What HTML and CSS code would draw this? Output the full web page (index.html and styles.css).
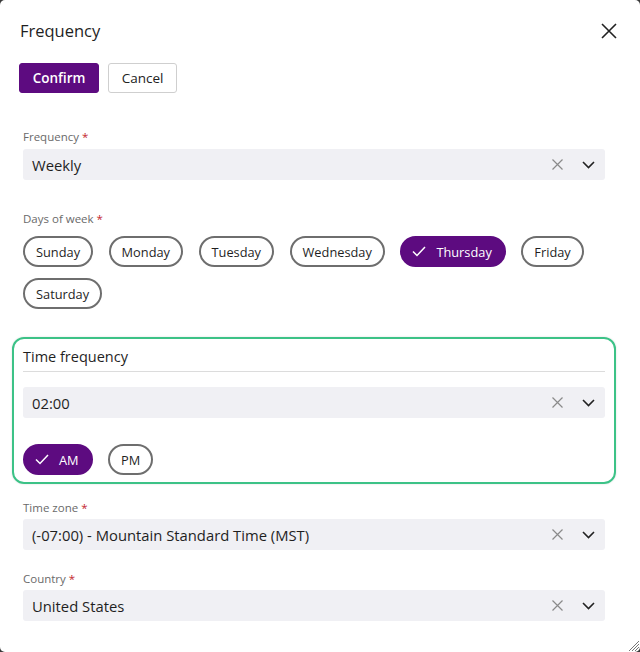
FILE: index.html
```html
<!DOCTYPE html>
<html>
<head>
<meta charset="utf-8">
<link rel="stylesheet" href="styles.css">
</head>
<body>
<div class="dialog">
  <div class="header">
    <h1 class="title">Frequency</h1>
    <button class="close" aria-label="Close">
      <svg width="16" height="16" viewBox="0 0 16 16"><path d="M1 1L15 15M15 1L1 15" stroke="#222" stroke-width="1.6" fill="none"/></svg>
    </button>
  </div>
  <div class="actions">
    <button class="btn primary">Confirm</button>
    <button class="btn secondary">Cancel</button>
  </div>

  <div class="form">
    <div class="field f-frequency">
      <label class="label">Frequency <span class="req">*</span></label>
      <div class="select">
        <span class="value">Weekly</span>
        <span class="clear"><svg width="11" height="11" viewBox="0 0 11 11"><path d="M0.5 0.5L10.5 10.5M10.5 0.5L0.5 10.5" stroke="#8a8a8a" stroke-width="1.2" fill="none"/></svg></span>
        <span class="chev"><svg width="13" height="8" viewBox="0 0 13 8"><path d="M1 1L6.5 6.5L12 1" stroke="#222" stroke-width="1.6" fill="none"/></svg></span>
      </div>
    </div>

    <div class="field f-days">
      <label class="label">Days of week <span class="req">*</span></label>
      <div class="chips">
        <span class="chip">Sunday</span>
        <span class="chip">Monday</span>
        <span class="chip">Tuesday</span>
        <span class="chip">Wednesday</span>
        <span class="chip selected"><svg class="check" width="14" height="11" viewBox="0 0 14 11"><path d="M1 5.5L5 9.5L13 1" stroke="#fff" stroke-width="1.5" fill="none"/></svg>Thursday</span>
        <span class="chip">Friday</span>
        <span class="chip">Saturday</span>
      </div>
    </div>

    <div class="timebox">
      <div class="tb-head">Time frequency</div>
      <div class="select tb-select">
        <span class="value">02:00</span>
        <span class="clear"><svg width="11" height="11" viewBox="0 0 11 11"><path d="M0.5 0.5L10.5 10.5M10.5 0.5L0.5 10.5" stroke="#8a8a8a" stroke-width="1.2" fill="none"/></svg></span>
        <span class="chev"><svg width="13" height="8" viewBox="0 0 13 8"><path d="M1 1L6.5 6.5L12 1" stroke="#222" stroke-width="1.6" fill="none"/></svg></span>
      </div>
      <div class="chips ampm">
        <span class="chip selected"><svg class="check" width="14" height="11" viewBox="0 0 14 11"><path d="M1 5.5L5 9.5L13 1" stroke="#fff" stroke-width="1.5" fill="none"/></svg>AM</span>
        <span class="chip">PM</span>
      </div>
    </div>

    <div class="field f-tz">
      <label class="label">Time zone <span class="req">*</span></label>
      <div class="select">
        <span class="value">(-07:00) - Mountain Standard Time (MST)</span>
        <span class="clear"><svg width="11" height="11" viewBox="0 0 11 11"><path d="M0.5 0.5L10.5 10.5M10.5 0.5L0.5 10.5" stroke="#8a8a8a" stroke-width="1.2" fill="none"/></svg></span>
        <span class="chev"><svg width="13" height="8" viewBox="0 0 13 8"><path d="M1 1L6.5 6.5L12 1" stroke="#222" stroke-width="1.6" fill="none"/></svg></span>
      </div>
    </div>

    <div class="field f-country">
      <label class="label">Country <span class="req">*</span></label>
      <div class="select">
        <span class="value">United States</span>
        <span class="clear"><svg width="11" height="11" viewBox="0 0 11 11"><path d="M0.5 0.5L10.5 10.5M10.5 0.5L0.5 10.5" stroke="#8a8a8a" stroke-width="1.2" fill="none"/></svg></span>
        <span class="chev"><svg width="13" height="8" viewBox="0 0 13 8"><path d="M1 1L6.5 6.5L12 1" stroke="#222" stroke-width="1.6" fill="none"/></svg></span>
      </div>
    </div>
  </div>

  <svg class="grip" width="14" height="14" viewBox="0 0 14 14"><path d="M13 3L3 13M13 6L6 13M13 9L9 13M13 12L12 13" stroke="#777" stroke-width="1" fill="none"/></svg>
</div>
</body>
</html>
```

FILE: styles.css
```css
html, body {
  margin: 0;
  padding: 0;
  background: #3a3a3a;
}
body {
  font-family: "Open Sans", "Noto Sans", "Liberation Sans", sans-serif;
  color: #222;
}
.dialog {
  position: relative;
  width: 640px;
  height: 652px;
  background: #fff;
  border-radius: 5px;
  overflow: hidden;
  box-sizing: border-box;
}
.header {
  display: flex;
  justify-content: space-between;
  align-items: center;
  padding: 19px 23px 0 20px;
  height: 24px;
}
.title {
  margin: 0;
  font-size: 16.5px;
  font-weight: 400;
  line-height: 24px;
  color: #1f1f1f;
}
.close {
  border: 0;
  background: transparent;
  padding: 0;
  width: 16px;
  height: 16px;
  display: flex;
}
.actions {
  display: flex;
  gap: 9px;
  padding: 20px 0 0 19px;
}
.btn {
  height: 30px;
  font-family: inherit;
  font-size: 13.5px;
  border-radius: 3px;
  box-sizing: border-box;
  padding: 0;
}
.btn.primary {
  width: 80px;
  background: #5d0b80;
  border: 1px solid #5d0b80;
  color: #fff;
  font-weight: 600;
}
.btn.secondary {
  width: 69px;
  background: #fff;
  border: 1px solid #cfcfcf;
  color: #222;
}
.form {
  padding: 0 35px 0 23px;
  display: flex;
  flex-direction: column;
}
.field {
  display: flex;
  flex-direction: column;
}
.label {
  font-size: 11.5px;
  line-height: 16px;
  color: #6a6a6a;
  height: 16px;
}
.req {
  color: #c4262e;
}
.f-frequency { margin-top: 36px; }
.f-frequency .label { margin-bottom: 4px; }
.f-days { margin-top: 31px; }
.f-days .label { margin-bottom: 9px; }
.f-tz { margin-top: 16px; }
.f-tz .label { margin-bottom: 3px; }
.f-country { margin-top: 21px; }
.f-country .label { margin-bottom: 3px; }

.select {
  display: flex;
  align-items: center;
  height: 31px;
  background: #f0f0f4;
  border-radius: 3px;
  padding: 0 10px 0 9px;
  box-sizing: border-box;
}
.select .value {
  flex: 1;
  font-size: 14.8px;
  color: #1f1f1f;
}
.select .clear {
  display: flex;
  margin-right: 19px;
}
.select .chev {
  display: flex;
}

.chips {
  display: flex;
  flex-wrap: wrap;
  gap: 11px 15.5px;
}
.chip {
  display: inline-flex;
  align-items: center;
  height: 31px;
  box-sizing: border-box;
  border: 2px solid #6e6e6e;
  border-radius: 16px;
  padding: 0 11px;
  font-size: 12.8px;
  color: #1f1f1f;
  background: #fff;
}
.chip.selected {
  background: #5d0b80;
  border-color: #5d0b80;
  color: #fff;
  padding: 0 12px 0 10px;
}
.chip .check {
  margin-right: 10px;
}

.timebox {
  margin: 28px -11px 0 -11px;
  border: 2px solid #3cc287;
  border-radius: 12px;
  padding: 7px 9px 7px 9px;
  box-shadow: 0 0 2px rgba(0,0,0,0.15);
}
.tb-head {
  font-size: 14.5px;
  line-height: 22px;
  padding-bottom: 3px;
  border-bottom: 1px solid #dcdcdc;
  color: #1f1f1f;
}
.tb-select {
  margin-top: 15px;
}
.ampm {
  margin-top: 26px;
}

.grip {
  position: absolute;
  right: 0;
  bottom: 0;
}
```
